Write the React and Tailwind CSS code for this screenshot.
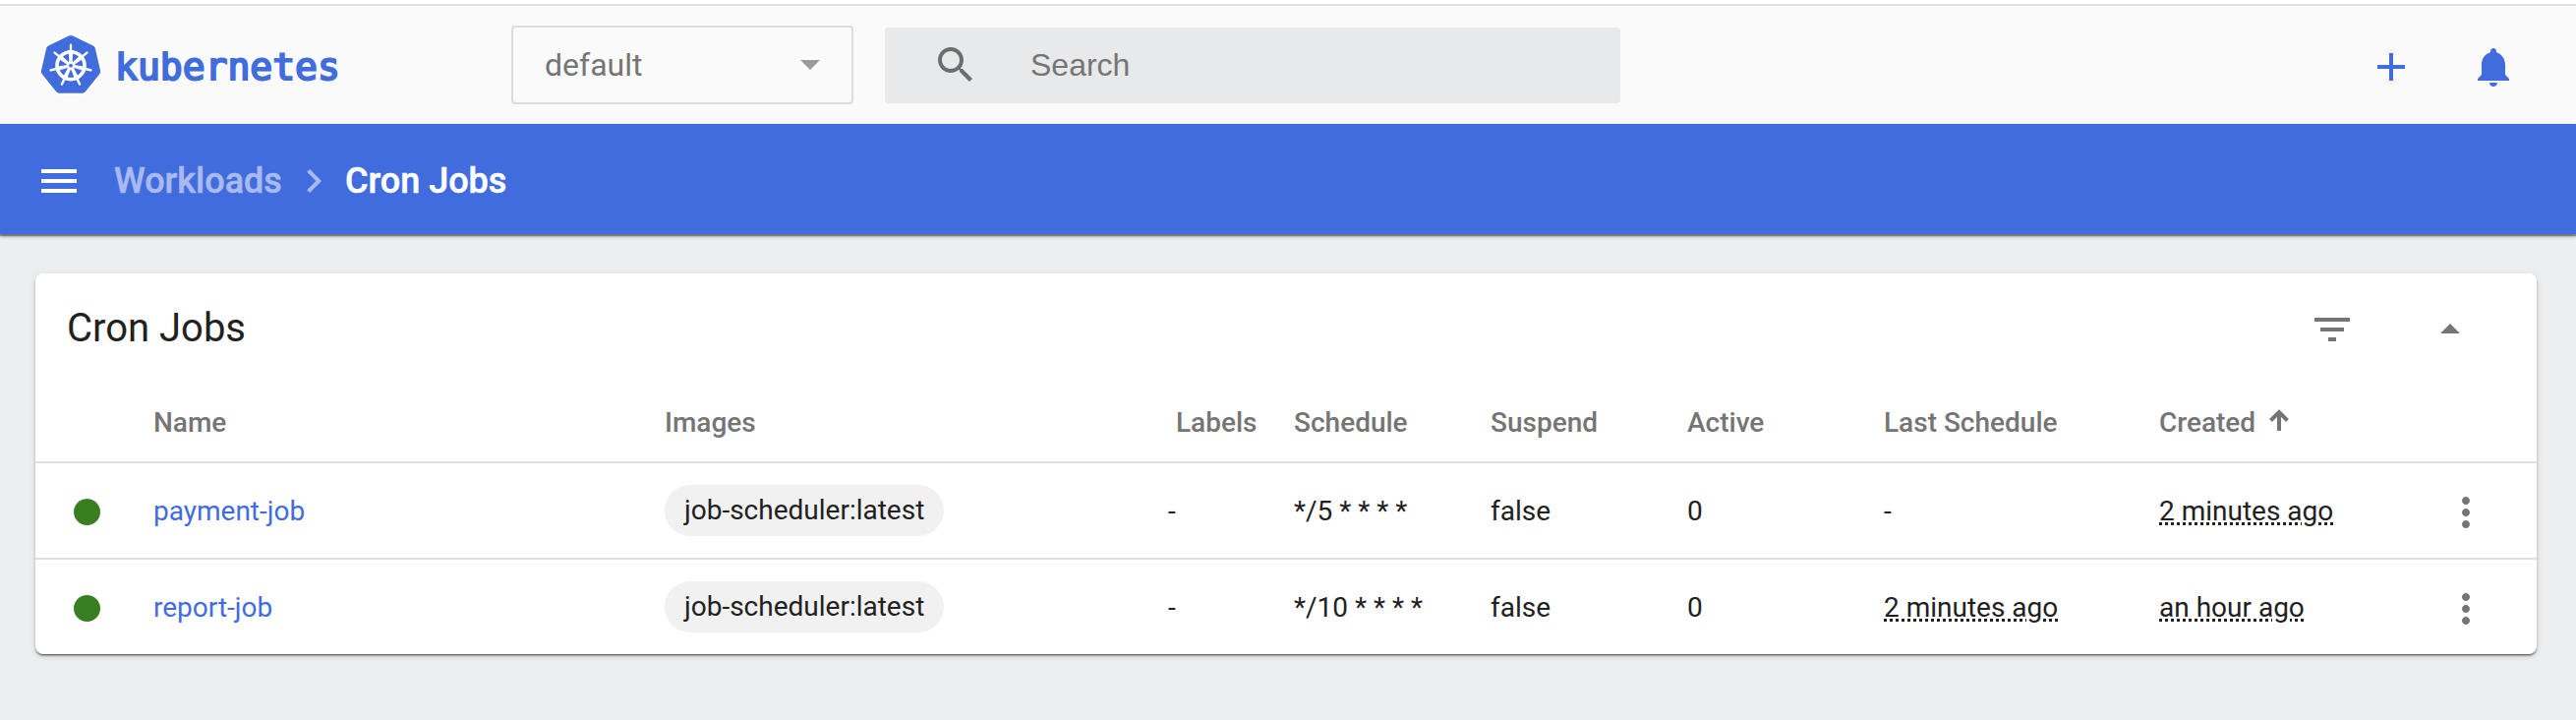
import React from "react";

const Icon = ({ d, className = "" }) => (
  <svg viewBox="0 0 24 24" className={"size-12 shrink-0 " + className} fill="currentColor">
    <path d={d} />
  </svg>
);

const icons = {
  search:
    "M15.5 14h-.79l-.28-.27C15.41 12.59 16 11.11 16 9.5 16 5.91 13.09 3 9.5 3S3 5.91 3 9.5 5.91 16 9.5 16c1.61 0 3.09-.59 4.23-1.57l.27.28v.79l5 4.99L20.49 19l-4.99-5zm-6 0C7.01 14 5 11.99 5 9.5S7.01 5 9.5 5 14 7.01 14 9.5 11.99 14 9.5 14z",
  add: "M19 13h-6v6h-2v-6H5v-2h6V5h2v6h6v2z",
  bell: "M12 22c1.1 0 2-.9 2-2h-4c0 1.1.89 2 2 2zm6-6v-5c0-3.07-1.64-5.64-4.5-6.32V4c0-.83-.67-1.5-1.5-1.5s-1.5.67-1.5 1.5v.68C7.63 5.36 6 7.92 6 11v5l-2 2v1h16v-1l-2-2z",
  menu: "M3 18h18v-2H3v2zm0-5h18v-2H3v2zm0-7v2h18V6H3z",
  chevron: "M10 6L8.59 7.41 13.17 12l-4.58 4.59L10 18l6-6z",
  filter: "M10 18h4v-2h-4v2zM3 6v2h18V6H3zm3 7h12v-2H6v2z",
  dropUp: "M7 14l5-5 5 5z",
  more: "M12 8c1.1 0 2-.9 2-2s-.9-2-2-2-2 .9-2 2 .9 2 2 2zm0 2c-1.1 0-2 .9-2 2s.9 2 2 2 2-.9 2-2-.9-2-2-2zm0 6c-1.1 0-2 .9-2 2s.9 2 2 2 2-.9 2-2-.9-2-2-2z",
};

const GRID =
  "grid grid-cols-[120px_520px_520px_120px_200px_200px_200px_280px_280px_104px] items-center";

const jobs = [
  { name: "payment-job", image: "job-scheduler:latest", schedule: "*/5 * * * *", last: null, created: "2 minutes ago" },
  { name: "report-job", image: "job-scheduler:latest", schedule: "*/10 * * * *", last: "2 minutes ago", created: "an hour ago" },
];

const Ago = ({ children }) => (
  <span className="underline decoration-dotted decoration-[3px] underline-offset-[2px]">{children}</span>
);

const HEPTAGON = "0,-26.8 20.95,-16.71 26.13,5.96 11.63,24.15 -11.63,24.15 -26.13,5.96 -20.95,-16.71";
const SPOKES = [0, 1, 2, 3, 4, 5, 6].map((n) => (n * 360) / 7);

function Logo() {
  return (
    <div className="flex items-center">
      <svg viewBox="-34 -34.7 68 68" className="size-[68px]">
        <polygon points={HEPTAGON} fill="#fff" stroke="#fff" strokeWidth="12" strokeLinejoin="round" />
        <polygon points={HEPTAGON} fill="#416cdd" stroke="#416cdd" strokeWidth="8" strokeLinejoin="round" />
        <circle r="14" fill="none" stroke="#fff" strokeWidth="3.6" />
        {SPOKES.map((angle) => (
          <g key={angle} transform={`rotate(${angle})`}>
            <path d="M0-15V-21" stroke="#fff" strokeWidth="2.4" strokeLinecap="round" />
            <path d="M-1.500-3 -2.200-13.500H2.200L1.500-3Z" fill="#fff" />
          </g>
        ))}
        <circle r="4.4" fill="#fff" />
        <circle r="1.9" fill="#416cdd" />
      </svg>
      <span className="mt-[3px] ml-[11px] font-['DejaVu_Sans_Mono',monospace] text-[38px] leading-none text-[#416cdd] [-webkit-text-stroke:2px_#416cdd]">
        kubernetes
      </span>
    </div>
  );
}

function Toolbar() {
  return (
    <header className="flex h-[120px] items-center bg-[#fafafa] pl-[38px] pr-[60px]">
      <div className="w-[482px]">
        <Logo />
      </div>
      <div className="flex h-20 w-[348px] items-center justify-between rounded border-2 border-[#dcdcdc] pl-8 pr-8 text-[32px] text-[#757575]">
        <span>default</span>
        <svg viewBox="0 0 20 10" className="h-[10px] w-5" fill="#9b9b9b">
          <path d="M0 0h20L10 10z" />
        </svg>
      </div>
      <div className="ml-8 flex h-[77px] w-[748px] items-center gap-[52px] rounded bg-[#e8e9eb] pl-12 text-[32px] text-[#757575]">
        <Icon d={icons.search} className="text-[#6b6e6d]" />
        <span className="font-['Liberation_Sans',sans-serif]">Search</span>
      </div>
      <div className="ml-auto mt-1 flex gap-14 text-[#416cdd]">
        <Icon d={icons.add} />
        <Icon d={icons.bell} />
      </div>
    </header>
  );
}

function Breadcrumbs() {
  return (
    <nav className="relative flex h-28 items-center bg-[#416cdd] pt-1 pl-9 text-[36px] font-medium text-white shadow-[0_2px_4px_rgba(0,0,0,0.4),0_2px_1px_rgba(0,0,0,0.3)]">
      <Icon d={icons.menu} />
      <span className="ml-8 w-[179px] text-[#a8baef] [-webkit-text-stroke:0.5px_#a8baef]">Workloads</span>
      <Icon d={icons.chevron} className="text-[#a8baef]" />
      <span className="ml-2 [-webkit-text-stroke:0.5px_#fff]">Cron Jobs</span>
    </nav>
  );
}

export default function App() {
  return (
    <div className="flex h-[732px] w-[2620px] flex-col overflow-hidden bg-[#edeef0] font-[Roboto,sans-serif] text-[#212121]">
      <div className="h-[6px] shrink-0 border-b-2 border-[#e0e0e0] bg-white" />
      <Toolbar />
      <Breadcrumbs />
      <main className="px-9 pt-10 pr-10">
        <section className="h-[387px] rounded-lg bg-white text-[28px] shadow-[0_2px_2px_rgba(0,0,0,0.3),0_2px_1px_-1px_rgba(0,0,0,0.3),0_2px_6px_rgba(0,0,0,0.12)]">
          <div className="flex h-[114px] items-center pl-8 pr-16">
            <h1 className="mb-[3px] text-[40px]">Cron Jobs</h1>
            <div className="ml-auto flex gap-[72px] text-[#757575]">
              <Icon d={icons.filter} />
              <Icon d={icons.dropUp} />
            </div>
          </div>
          <div className={GRID + " h-[79px] border-b-2 border-[#e0e0e0] pb-[2px] font-medium text-[#757575]"}>
            <span />
            <span>Name</span>
            <span>Images</span>
            <span>Labels</span>
            <span>Schedule</span>
            <span>Suspend</span>
            <span>Active</span>
            <span>Last Schedule</span>
            <span className="flex items-center gap-[14px]">
              Created
              <svg viewBox="0 0 20 22" className="mb-[5px] h-[22px] w-5" fill="none" stroke="currentColor" strokeWidth="4">
                <path d="M10 22V3M1.500 11.500 10 3l8.500 8.500" />
              </svg>
            </span>
            <span />
          </div>
          {jobs.map((job, i) => (
            <div
              key={job.name}
              className={GRID + " pt-[2px]" + (i === 0 ? " h-[98px] border-b-2 border-[#e0e0e0]" : " h-24")}
            >
              <span className="ml-[38.5px] size-[27px] rounded-full bg-[#397f22]" />
              <a className="text-[#416cdd]">{job.name}</a>
              <span className="mb-[2px] flex h-[52px] w-fit items-center rounded-[26px] bg-[#f1f1f1] px-5">{job.image}</span>
              <span className="-ml-2">-</span>
              <span>{job.schedule}</span>
              <span>false</span>
              <span>0</span>
              <span>{job.last ? <Ago>{job.last}</Ago> : "-"}</span>
              <span>
                <Ago>{job.created}</Ago>
              </span>
              <Icon d={icons.more} className="mt-[2px] ml-2 text-[#757575]" />
            </div>
          ))}
        </section>
      </main>
    </div>
  );
}
